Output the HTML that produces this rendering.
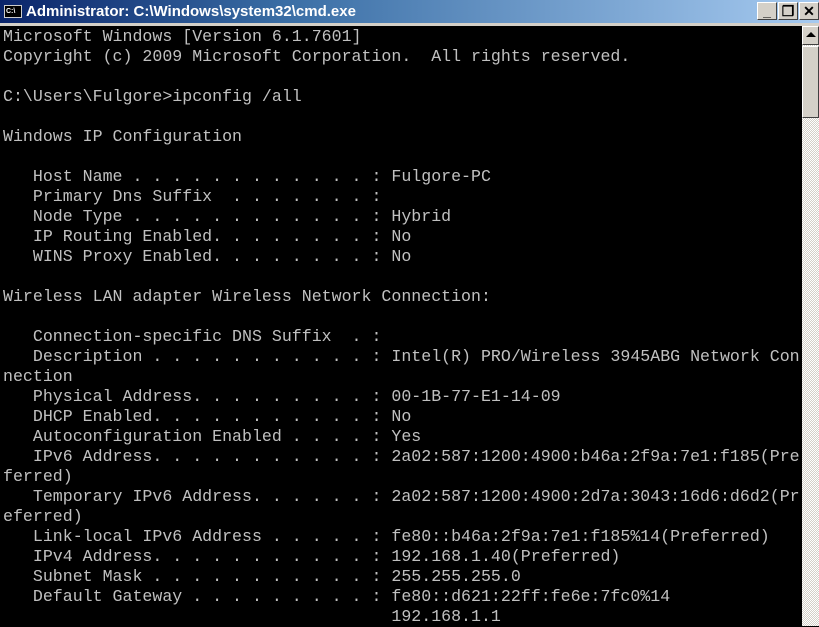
<!DOCTYPE html>
<html><head><style>
html,body{margin:0;padding:0;width:819px;height:626px;overflow:hidden;background:#000}
#title{position:absolute;left:0;top:0;width:819px;height:23px;background:linear-gradient(90deg,#0a246a 0%,#3a6ea5 35%,#a6caf0 100%);}
#title .t{position:absolute;left:26px;top:3px;color:#fff;font:bold 15px "Liberation Sans",sans-serif;}
#icon{position:absolute;left:4px;top:5px;width:18px;height:13px;background:#000;border:1px solid #ccc;box-sizing:border-box;color:#fff;font:bold 7px "Liberation Sans",sans-serif;line-height:11px;padding-left:1px}
.btn{position:absolute;top:2px;width:20px;height:18px;background:#d4d0c8;border:1px solid;border-color:#fff #404040 #404040 #fff;box-sizing:border-box;font:bold 14px "Liberation Sans",sans-serif;text-align:center;line-height:16px;color:#000}
#sep{position:absolute;left:0;top:23px;width:819px;height:3px;background:#d4d0c8}
#con{position:absolute;left:3px;top:27px;width:799px;color:#c0c0c0;font:16.6px/20px "Liberation Mono",monospace;white-space:pre;}
#sb{position:absolute;left:802px;top:26px;width:17px;height:600px;background-color:#e8e6e2;background-image:repeating-conic-gradient(#d4d0c8 0 25%,#fff 0 50%);background-size:2px 2px}
#up{position:absolute;left:0;top:0;width:17px;height:19px;background:#d4d0c8;border:1px solid;border-color:#fff #404040 #404040 #fff;box-sizing:border-box}
#up:after{content:"";position:absolute;left:3px;top:5px;border-left:5px solid transparent;border-right:5px solid transparent;border-bottom:5px solid #000}
#thumb{position:absolute;left:0;top:20px;width:17px;height:72px;background:#d4d0c8;border:1px solid;border-color:#fff #404040 #404040 #fff;box-sizing:border-box}
</style></head><body>
<div id="title"><div id="icon">C:\</div><div class="t">Administrator: C:\Windows\system32\cmd.exe</div>
<div class="btn" style="left:757px">_</div><div class="btn" style="left:778px">&#x2750;</div><div class="btn" style="left:799px">✕</div></div>
<div id="sep"></div>
<div id="con">Microsoft Windows [Version 6.1.7601]
Copyright (c) 2009 Microsoft Corporation.  All rights reserved.

C:\Users\Fulgore>ipconfig /all

Windows IP Configuration

   Host Name . . . . . . . . . . . . : Fulgore-PC
   Primary Dns Suffix  . . . . . . . :
   Node Type . . . . . . . . . . . . : Hybrid
   IP Routing Enabled. . . . . . . . : No
   WINS Proxy Enabled. . . . . . . . : No

Wireless LAN adapter Wireless Network Connection:

   Connection-specific DNS Suffix  . :
   Description . . . . . . . . . . . : Intel(R) PRO/Wireless 3945ABG Network Con
nection
   Physical Address. . . . . . . . . : 00-1B-77-E1-14-09
   DHCP Enabled. . . . . . . . . . . : No
   Autoconfiguration Enabled . . . . : Yes
   IPv6 Address. . . . . . . . . . . : 2a02:587:1200:4900:b46a:2f9a:7e1:f185(Pre
ferred)
   Temporary IPv6 Address. . . . . . : 2a02:587:1200:4900:2d7a:3043:16d6:d6d2(Pr
eferred)
   Link-local IPv6 Address . . . . . : fe80::b46a:2f9a:7e1:f185%14(Preferred)
   IPv4 Address. . . . . . . . . . . : 192.168.1.40(Preferred)
   Subnet Mask . . . . . . . . . . . : 255.255.255.0
   Default Gateway . . . . . . . . . : fe80::d621:22ff:fe6e:7fc0%14
                                       192.168.1.1</div>
<div id="sb"><div id="up"></div><div id="thumb"></div></div>
</body></html>
